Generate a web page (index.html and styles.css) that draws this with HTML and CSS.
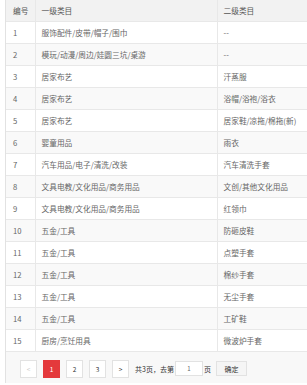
FILE: index.html
```html
<!DOCTYPE html>
<html>
<head>
<meta charset="utf-8">
<link rel="stylesheet" href="styles.css">
</head>
<body>
<div class="wrap">
  <table class="grid">
    <colgroup><col class="c1"><col class="c2"><col class="c3"></colgroup>
    <thead>
      <tr><th>编号</th><th>一级类目</th><th>二级类目</th></tr>
    </thead>
    <tbody>
      <tr><td>1</td><td>服饰配件/皮带/帽子/围巾</td><td>--</td></tr>
      <tr><td>2</td><td>模玩/动漫/周边/娃圆三坑/桌游</td><td>--</td></tr>
      <tr><td>3</td><td>居家布艺</td><td>汗蒸服</td></tr>
      <tr><td>4</td><td>居家布艺</td><td>浴帽/浴袍/浴衣</td></tr>
      <tr><td>5</td><td>居家布艺</td><td>居家鞋/凉拖/棉拖(新)</td></tr>
      <tr><td>6</td><td>婴童用品</td><td>雨衣</td></tr>
      <tr><td>7</td><td>汽车用品/电子/清洗/改装</td><td>汽车清洗手套</td></tr>
      <tr><td>8</td><td>文具电教/文化用品/商务用品</td><td>文创/其他文化用品</td></tr>
      <tr><td>9</td><td>文具电教/文化用品/商务用品</td><td>红领巾</td></tr>
      <tr><td>10</td><td>五金/工具</td><td>防砸皮鞋</td></tr>
      <tr><td>11</td><td>五金/工具</td><td>点塑手套</td></tr>
      <tr><td>12</td><td>五金/工具</td><td>棉纱手套</td></tr>
      <tr><td>13</td><td>五金/工具</td><td>无尘手套</td></tr>
      <tr><td>14</td><td>五金/工具</td><td>工矿鞋</td></tr>
      <tr><td>15</td><td>厨房/烹饪用具</td><td>微波炉手套</td></tr>
    </tbody>
  </table>
  <div class="pager">
    <span class="pbtn off">&lt;</span>
    <span class="pbtn cur">1</span>
    <span class="pbtn">2</span>
    <span class="pbtn">3</span>
    <span class="pbtn">&gt;</span>
    <span class="ptext">共3页，去第</span>
    <span class="pinput">1</span>
    <span class="ptext">页</span>
    <span class="pok">确定</span>
  </div>
</div>
</body>
</html>
```
FILE: styles.css
```css
html, body {
  margin: 0;
  padding: 0;
  overflow: hidden;
  background: #fff;
}
body {
  font-family: "Noto Sans CJK SC", "Noto Sans", sans-serif;
  font-size: 7.7px;
  color: #666;
}
.wrap {
  margin-left: 5px;
  border-left: 1px solid #e2e2e2;
  width: 301px;
}
.grid {
  border-collapse: collapse;
  table-layout: fixed;
  width: 301px;
}
.c1 { width: 29px; }
.c2 { width: 182px; }
.c3 { width: 90px; }
.grid th, .grid td {
  height: 21px;
  padding: 0 0 0 6px;
  text-align: left;
  font-weight: normal;
  border-bottom: 1px solid #e8e8e8;
  white-space: nowrap;
  overflow: hidden;
}
.grid th + th, .grid td + td {
  border-left: 1px solid #e8e8e8;
}
.grid th:first-child, .grid td:first-child {
  padding-left: 7px;
}
.grid thead tr {
  background: #f2f2f2;
  color: #555;
}
.grid tbody tr:nth-child(even) {
  background: #f9f9f9;
}
.pager {
  background: #f8f8f8;
  height: 31px;
  display: flex;
  align-items: center;
  padding-left: 14px;
  padding-top: 2px;
  box-sizing: border-box;
  color: #333;
}
.pbtn {
  width: 17px;
  height: 18px;
  box-sizing: border-box;
  border: 1px solid #e2e2e2;
  background: #fff;
  display: flex;
  align-items: center;
  justify-content: center;
  margin-right: 6px;
  font-size: 6.5px;
  color: #333;
}
.pbtn.off { color: #ccc; }
.pbtn.cur {
  background: #e4393c;
  border-color: #e4393c;
  color: #fff;
}
.ptext { font-size: 7px; color: #333; }
.pinput {
  width: 28px;
  height: 15px;
  box-sizing: border-box;
  border: 1px solid #e2e2e2;
  background: #fff;
  display: flex;
  align-items: center;
  justify-content: center;
  font-size: 6px;
  color: #666;
  margin: 0 1px;
}
.pok {
  margin-left: 5px;
  width: 31px;
  height: 15px;
  box-sizing: border-box;
  border: 1px solid #e2e2e2;
  background: #f5f5f5;
  display: flex;
  align-items: center;
  justify-content: center;
  font-size: 7px;
  color: #333;
}
```
